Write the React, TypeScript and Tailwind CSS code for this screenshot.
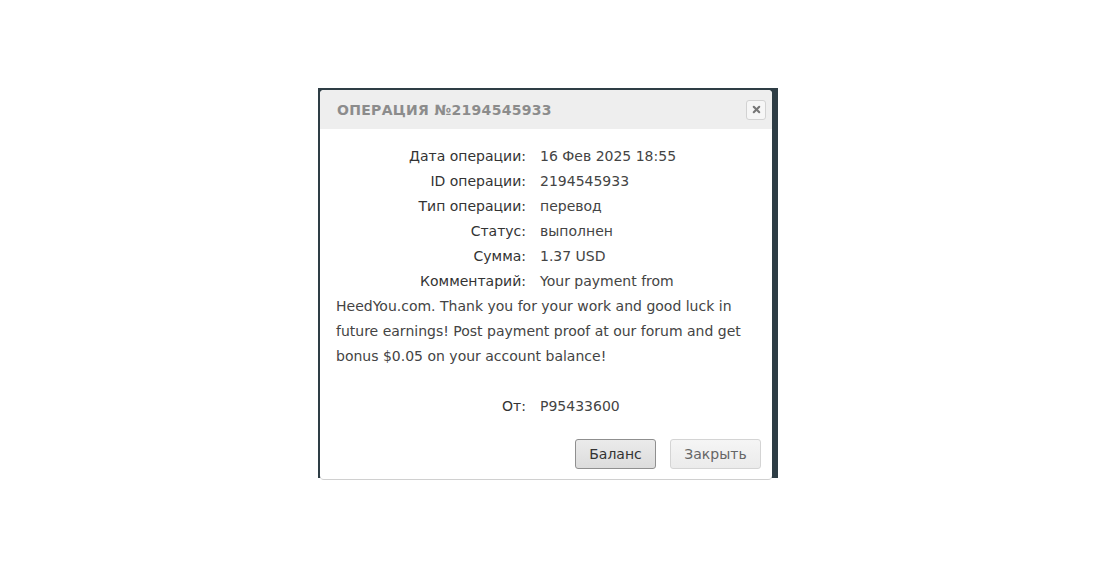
import { X } from "lucide-react";

const rows: [string, string][] = [
  ["Дата операции:", "16 Фев 2025 18:55"],
  ["ID операции:", "2194545933"],
  ["Тип операции:", "перевод"],
  ["Статус:", "выполнен"],
  ["Сумма:", "1.37 USD"],
];

function Label({ children }: { children: React.ReactNode }) {
  return (
    <span className="inline-block w-[204px] pr-[14px] text-right font-medium text-[#333]">
      {children}
    </span>
  );
}

export default function App() {
  return (
    <div
      className="min-h-[568px] bg-white pt-[88px] pl-[318px]"
      style={{ fontFamily: '"DejaVu Sans", "Noto Sans", sans-serif' }}
    >
      <div className="h-[390px] w-[460px] bg-[#2e3d45] pt-[2px] pl-[2px]">
        <div className="flex h-[390px] w-[452px] flex-col rounded-[4px] border-b border-[#d0d0d0] bg-white">
          <div className="flex h-[39px] items-center justify-between rounded-t-[4px] bg-[#eeeeee] pt-[2px] pl-[17px] pr-[6px]">
            <span className="text-[14px] font-semibold tracking-[0.3px] text-[#8c8c8c]">
              ОПЕРАЦИЯ №2194545933
            </span>
            <button className="-mt-[2px] flex h-[20px] w-[20px] items-center justify-center rounded-[3px] border border-[#d2d2d2] bg-[#f6f6f6]">
              <X className="h-[11px] w-[11px] text-[#777]" strokeWidth={4.5} />
            </button>
          </div>
          <div className="px-[16px] pt-[15px] text-[14px] leading-[25px] text-[#444]">
            {rows.map(([k, v]) => (
              <div key={k}>
                <Label>{k}</Label>
                <span>{v}</span>
              </div>
            ))}
            <div>
              <Label>Комментарий:</Label>
              <span>
                Your payment from
                <br />
                HeedYou.com. Thank you for your work and good luck in
                <br />
                future earnings! Post payment proof at our forum and get
                <br />
                bonus $0.05 on your account balance!
              </span>
            </div>
            <div className="h-[25px]" />
            <div>
              <Label>От:</Label>
              <span>P95433600</span>
            </div>
          </div>
          <div className="mt-[20px] flex justify-end gap-[14px] pr-[11px]">
            <button className="h-[30px] w-[81px] rounded-[3px] border border-[#8f8f8f] bg-gradient-to-b from-[#ebebeb] to-[#dcdcdc] text-[14px] text-[#333]">
              Баланс
            </button>
            <button className="h-[30px] w-[91px] rounded-[3px] border border-[#d4d4d4] bg-gradient-to-b from-[#f5f5f5] to-[#ebebeb] text-[14px] text-[#666]">
              Закрыть
            </button>
          </div>
        </div>
      </div>
    </div>
  );
}
